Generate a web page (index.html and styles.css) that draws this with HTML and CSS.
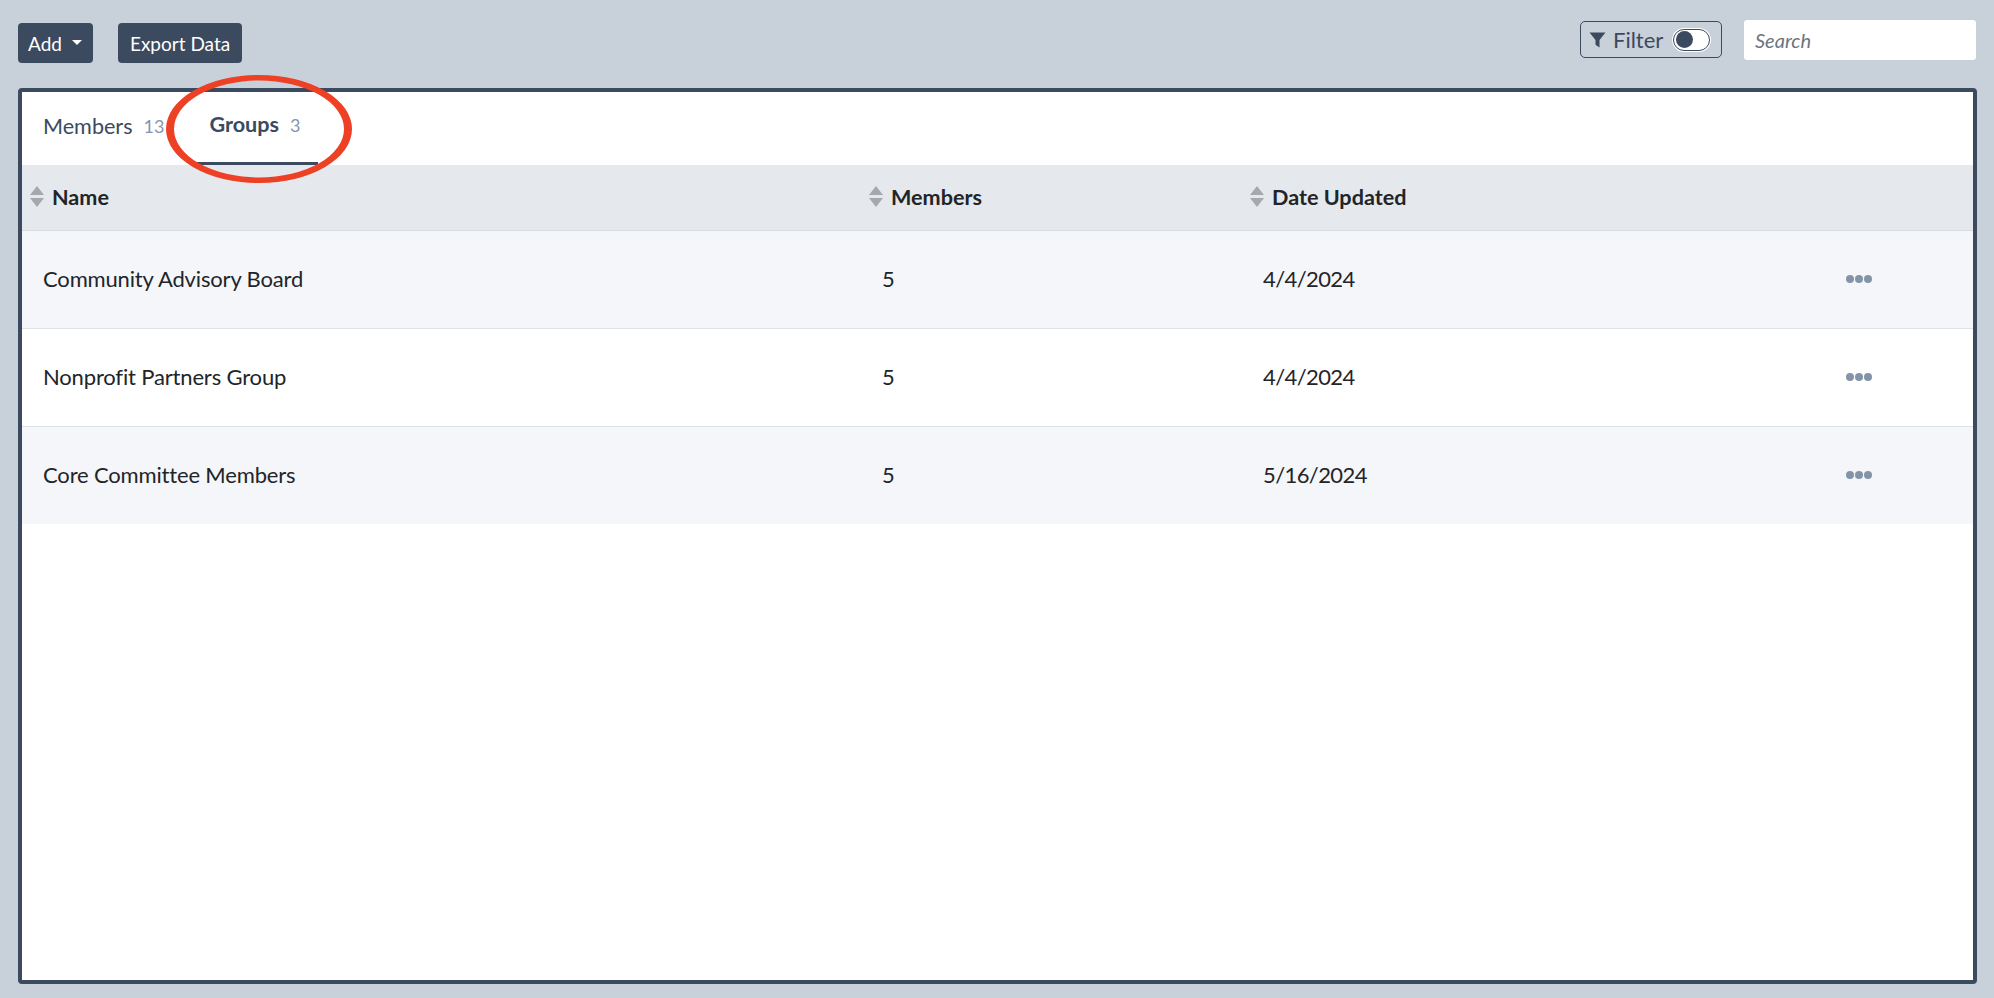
FILE: index.html
```html
<!DOCTYPE html>
<html lang="en">
<head>
<meta charset="utf-8">
<title>Groups</title>
<link rel="stylesheet" href="styles.css">
</head>
<body>
<header class="toolbar">
  <div class="actions">
    <button class="btn add">Add <span class="caret"></span></button>
    <button class="btn">Export Data</button>
  </div>
  <div class="tools">
    <div class="filter">
      <svg class="funnel" viewBox="0 0 16 16"><path d="M0.5 1h15l-5.6 7v7l-3.8-2.6V8z"/></svg>
      <span>Filter</span>
      <span class="toggle"><span class="knob"></span></span>
    </div>
    <div class="search">Search</div>
  </div>
</header>
<main class="panel">
  <nav class="tabs">
    <div class="tab">Members <span class="count">13</span></div>
    <div class="tab active">Groups <span class="count">3</span></div>
  </nav>
  <div class="thead">
    <div class="th first"><span class="sort"></span>Name</div>
    <div class="th"><span class="sort"></span>Members</div>
    <div class="th"><span class="sort"></span>Date Updated</div>
    <div></div>
  </div>
  <div class="row odd">
    <div class="td">Community Advisory Board</div><div class="td">5</div><div class="td date">4/4/2024</div>
    <div class="more"><i></i><i></i><i></i></div>
  </div>
  <div class="row">
    <div class="td">Nonprofit Partners Group</div><div class="td">5</div><div class="td date">4/4/2024</div>
    <div class="more"><i></i><i></i><i></i></div>
  </div>
  <div class="row odd last">
    <div class="td">Core Committee Members</div><div class="td">5</div><div class="td date">5/16/2024</div>
    <div class="more"><i></i><i></i><i></i></div>
  </div>
  <svg class="circle" viewBox="0 0 186 108"><path fill-rule="evenodd" d="M0 54a93 54 0 1 0 186 0a93 54 0 1 0 -186 0ZM8 54a85 48.5 0 1 1 170 0a85 48.5 0 1 1 -170 0Z"/></svg>
</main>
</body>
</html>
```
FILE: styles.css
```css
* { box-sizing: border-box; }
html, body { height: 100%; }
body {
  margin: 0;
  background: #c8d0da;
  font-family: Lato, "Liberation Sans", sans-serif;
  color: #212529;
  padding: 20px 18px 14px;
  display: flex;
  flex-direction: column;
  overflow: hidden;
}
.toolbar {
  display: flex;
  justify-content: space-between;
  align-items: flex-start;
  height: 68px;
  flex: none;
}
.actions { display: flex; gap: 25px; padding-top: 3px; }
.btn {
  height: 40px;
  border: 0;
  border-radius: 4px;
  background: #3b4a5f;
  color: #fff;
  font: 400 19px Lato, sans-serif;
  padding: 1px 12px 0;
  display: flex;
  align-items: center;
}
.btn.add { padding: 1px 11px 0 10px; }
.caret {
  width: 0;
  height: 0;
  margin-left: 10px;
  margin-top: -3px;
  border-left: 5px solid transparent;
  border-right: 5px solid transparent;
  border-top: 5px solid #fff;
}
.tools { display: flex; gap: 22px; }
.filter {
  width: 142px;
  height: 37px;
  margin-top: 1px;
  border: 1px solid #3b4a5f;
  border-radius: 5px;
  color: #3b4a5f;
  font-size: 22px;
  display: flex;
  align-items: center;
  padding-left: 8px;
}
.funnel { width: 17px; height: 18px; fill: #3b4a5f; margin-right: 7px; }
.toggle {
  width: 37px;
  height: 22px;
  margin-left: 10px;
  border: 1px solid #3b4a5f;
  border-radius: 11px;
  background: #fff;
  box-shadow: 0 0 0 1px #fff;
  display: flex;
  align-items: center;
  padding-left: 2px;
}
.knob { width: 17px; height: 17px; border-radius: 50%; background: #3b4a5f; }
.search {
  width: 232px;
  height: 40px;
  background: #fff;
  border-radius: 3px;
  color: #6c757d;
  font-style: italic;
  font-size: 20px;
  display: flex;
  align-items: center;
  padding-left: 11px;
}
.panel {
  position: relative;
  flex: 1;
  margin-right: -1px;
  background: #fff;
  border: 4px solid #3b4a5f;
  border-radius: 4px;
}
.tabs { display: flex; height: 73px; }
.tab {
  color: #3b4a5f;
  font-size: 21.6px;
  padding: 0 0 6px 21px;
  display: flex;
  align-items: center;
  gap: 11px;
  height: 73px;
}
.tab.active {
  font-weight: 700;
  margin-left: 33px;
  padding: 0 18px 6px 12px;
  border-bottom: 3px solid #3b4a5f;
}
.count { font-size: 18px; font-weight: 400; color: #8496ad; margin-top: 1px; }
.thead, .row {
  display: grid;
  grid-template-columns: 838px 381px 1fr 130px;
}
.thead {
  height: 66px;
  background: #e5e8ec;
  border-bottom: 1px solid #d8dce2;
  align-items: center;
}
.th {
  font-weight: 700;
  font-size: 21.6px;
  display: flex;
  align-items: center;
  padding: 0 0 2px 9px;
}
.th.first { padding-left: 8px; }
.sort {
  width: 14px;
  height: 21px;
  margin-right: 8px;
  position: relative;
}
.sort::before, .sort::after {
  content: "";
  position: absolute;
  left: 0;
  border-left: 7px solid transparent;
  border-right: 7px solid transparent;
}
.sort::before { top: 0; border-bottom: 9px solid #a5a8ac; }
.sort::after { bottom: 0; border-top: 9px solid #a5a8ac; }
.row {
  height: 98px;
  align-items: center;
  border-bottom: 1px solid #dfe2e7;
  padding-bottom: 1px;
}
.row.odd { background: #f5f6f9; }
.row.last { border-bottom: 0; height: 97px; }
.td { font-size: 22px; padding: 0 0 2px 22px; letter-spacing: -0.16px; }
.td:first-child { padding-left: 21px; }
.date { letter-spacing: -0.6px; }
.more { display: flex; gap: 1px; padding: 0 0 1px 3px; }
.more i { width: 8px; height: 8px; border-radius: 50%; background: #8494a8; }
.circle {
  position: absolute;
  left: 144px;
  top: -17px;
  width: 186px;
  height: 108px;
  fill: #ee4024;
}
```
